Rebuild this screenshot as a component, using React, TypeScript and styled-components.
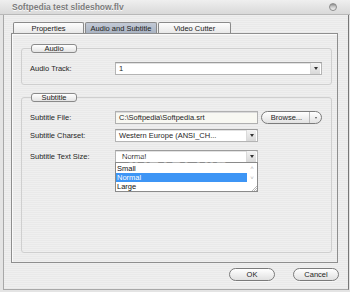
import React from 'react';
import styled, { createGlobalStyle } from 'styled-components';

const Global = createGlobalStyle`
  html, body { margin: 0; padding: 0; width: 350px; height: 292px; overflow: hidden; background: #dcdcdc; }
  * { box-sizing: border-box; }
`;

const stripes = `repeating-linear-gradient(to bottom, #efefef 0px, #efefef 1px, #e9e9e9 1px, #e9e9e9 2px)`;

const Window = styled.div`
  width: 350px;
  height: 292px;
  display: flex;
  flex-direction: column;
  font-family: "Liberation Sans", Arial, sans-serif;
  font-size: 7.5px;
  color: #262626;
  background: #e4e4e4;
`;

const TitleBar = styled.div`
  height: 15px;
  flex: none;
  display: flex;
  align-items: center;
  justify-content: space-between;
  padding: 0 12px 0 12px;
  background: linear-gradient(#efefef, #d9d9d9);
  border-bottom: 1px solid #b8b8b8;
`;

const Title = styled.span`
  font-size: 8.5px;
  font-weight: bold;
  color: #7c7c7c;
  text-shadow: 0 1px 0 #fafafa;
`;

const CloseDot = styled.span`
  width: 8px;
  height: 8px;
  border-radius: 50%;
  border: 1px solid #8c8c8c;
  background: linear-gradient(#8c8c8c 0, #c8c8c8 45%, #f4f4f4 100%);
  margin-right: 1px;
`;

const Frame = styled.div`
  flex: 1;
  margin-left: 3px;
  margin-right: 1px;
  margin-bottom: 2px;
  border-left: 1px solid #a8a8a8;
  border-right: 1px solid #777;
  border-bottom: 1px solid #a8a8a8;
  background: ${stripes};
  display: flex;
  flex-direction: column;
  padding: 7px 10px 0 7px;
`;

const TabRow = styled.div`
  display: flex;
  margin-left: 2px;
  height: 11px;
`;

const Tab = styled.div<{ $active?: boolean; $w: number }>`
  width: ${p => p.$w}px;
  height: 11px;
  display: flex;
  align-items: center;
  justify-content: center;
  border: 1px solid #8a8a8a;
  border-bottom: none;
  margin-right: 1px;
  border-radius: 2px 2px 0 0;
  background: ${p => (p.$active ? 'linear-gradient(#c3cad6, #a9b3c2)' : 'linear-gradient(#fdfdfd, #e8e8e8)')};
  color: #222;
`;

const Panel = styled.div`
  height: 230px;
  border: 1px solid #8e8e8e;
  box-shadow: inset 1px 1px 0 #fafafa;
  padding: 10px 5px 0 9px;
  display: flex;
  flex-direction: column;
  gap: 8px;
  position: relative;
`;

const Group = styled.fieldset<{ $h?: number }>`
  margin: 0;
  padding: 9px 9px 9px 8px;
  border: 1px solid #cfcfcf;
  border-radius: 3px;
  min-width: 0;
  ${p => (p.$h ? `height: ${p.$h}px;` : '')}
  position: relative;
`;

const Legend = styled.legend`
  width: 46px;
  height: 9px;
  padding: 0;
  margin-left: 1px;
  border: 1px solid #8a8a8a;
  border-radius: 3px;
  background: linear-gradient(#ffffff, #e4e4e4);
  display: flex;
  align-items: center;
  justify-content: center;
  color: #222;
  line-height: 1;
`;

const Rows = styled.div`
  display: flex;
  flex-direction: column;
  gap: 5px;
`;

const Row = styled.div<{ $mt?: number }>`
  display: flex;
  align-items: center;
  height: 13px;
  ${p => (p.$mt ? `margin-top: ${p.$mt}px;` : '')}
  position: relative;
`;

const Label = styled.span`
  width: 85px;
  flex: none;
  color: #262626;
`;

const Select = styled.div<{ $w: number }>`
  width: ${p => p.$w}px;
  height: 13px;
  display: flex;
  align-items: center;
  background: #fff;
  border: 1px solid #b4b4b4;
  border-top-color: #9c9c9c;
  box-shadow: inset 0 1px 0 #e2e2e2;
`;

const SelectText = styled.span<{ $pl?: number }>`
  flex: 1;
  padding-left: ${p => p.$pl ?? 3}px;
  white-space: nowrap;
  overflow: hidden;
`;

const Arrow = styled.span`
  width: 10px;
  height: 11px;
  margin-right: 1px;
  display: flex;
  align-items: center;
  justify-content: center;
  background: linear-gradient(#f4f4f4, #d8d8d8);
  border-left: 1px solid #dadada;
  &::after {
    content: '';
    border-left: 2px solid transparent;
    border-right: 2px solid transparent;
    border-top: 3px solid #333;
  }
`;

const TextInput = styled.div`
  width: 143px;
  height: 13px;
  display: flex;
  align-items: center;
  padding-left: 3px;
  background: #f8f8f2;
  border: 1px solid #b0b0b0;
  box-shadow: inset 0 1px 0 #dadada;
`;

const BrowseButton = styled.div`
  width: 61px;
  height: 13px;
  margin-left: 3px;
  display: flex;
  align-items: center;
  border: 1px solid #7c7c7c;
  border-radius: 7px;
  background: linear-gradient(#ffffff, #e2e2e2);
`;

const BrowseText = styled.span`
  flex: 1;
  text-align: center;
  padding-left: 2px;
`;

const BrowseMenu = styled.span`
  width: 12px;
  height: 100%;
  border-left: 1px solid #b8b8b8;
  display: flex;
  align-items: center;
  justify-content: center;
  &::after {
    content: '';
    border-left: 1.5px solid transparent;
    border-right: 1.5px solid transparent;
    border-top: 2px solid #555;
  }
`;

const Popup = styled.div`
  position: absolute;
  left: 85px;
  top: 12px;
  width: 143px;
  height: 30px;
  background: #fff;
  border: 1px solid #8a8a8a;
  display: flex;
  z-index: 2;
`;

const PopupList = styled.div`
  flex: 1;
  display: flex;
  flex-direction: column;
  padding-top: 1px;
`;

const PopupItem = styled.div<{ $sel?: boolean }>`
  height: 9px;
  line-height: 9px;
  padding-left: 1px;
  background: ${p => (p.$sel ? '#3d95f5' : 'transparent')};
  color: ${p => (p.$sel ? '#fff' : '#111')};
`;

const Scroll = styled.div`
  width: 10px;
  display: flex;
  flex-direction: column;
  align-items: center;
  justify-content: space-between;
  color: #b0b0b0;
  font-size: 6px;
  line-height: 6px;
  padding: 2px 0 0;
`;

const Grip = styled.svg`
  width: 6px;
  height: 6px;
  align-self: flex-end;
`;

const Footer = styled.div`
  display: flex;
  justify-content: flex-end;
  gap: 18px;
  padding: 5px 0 0 0;
  margin-right: -1px;
`;

const PillButton = styled.div`
  width: 46px;
  height: 13px;
  display: flex;
  align-items: center;
  justify-content: center;
  border: 1px solid #7a7a7a;
  border-radius: 7px;
  background: linear-gradient(#ffffff, #e0e0e0);
  box-shadow: 0 1px 0 #f8f8f8;
  color: #222;
`;

const Watermark = styled.div`
  position: absolute;
  left: 110px;
  top: 118px;
  font-size: 17px;
  font-weight: bold;
  letter-spacing: 1px;
  color: rgba(255, 255, 255, 0.4);
  pointer-events: none;
  z-index: 3;
`;

export default function App() {
  return (
    <>
      <Global />
      <Window>
        <TitleBar>
          <Title>Softpedia test slideshow.flv</Title>
          <CloseDot />
        </TitleBar>
        <Frame>
          <TabRow>
            <Tab $w={71}>Properties</Tab>
            <Tab $w={72} $active>Audio and Subtitle</Tab>
            <Tab $w={73}>Video Cutter</Tab>
          </TabRow>
          <Panel>
            <Group>
              <Legend>Audio</Legend>
              <Row>
                <Label>Audio Track:</Label>
                <Select $w={208}>
                  <SelectText>1</SelectText>
                  <Arrow />
                </Select>
              </Row>
            </Group>
            <Group $h={160}>
              <Legend>Subtitle</Legend>
              <Rows>
                <Row>
                  <Label>Subtitle File:</Label>
                  <TextInput>C:\Softpedia\Softpedia.srt</TextInput>
                  <BrowseButton>
                    <BrowseText>Browse...</BrowseText>
                    <BrowseMenu />
                  </BrowseButton>
                </Row>
                <Row>
                  <Label>Subtitle Charset:</Label>
                  <Select $w={143}>
                    <SelectText>Western Europe (ANSI_CH...</SelectText>
                    <Arrow />
                  </Select>
                </Row>
                <Row $mt={3}>
                  <Label>Subtitle Text Size:</Label>
                  <Select $w={143}>
                    <SelectText $pl={6}>Normal</SelectText>
                    <Arrow />
                  </Select>
                  <Popup>
                    <PopupList>
                      <PopupItem>Small</PopupItem>
                      <PopupItem $sel>Normal</PopupItem>
                      <PopupItem>Large</PopupItem>
                    </PopupList>
                    <Scroll>
                      <span>˄</span>
                      <span>˅</span>
                      <Grip viewBox="0 0 6 6">
                        <path d="M1 6 L6 1 M3 6 L6 3 M5 6 L6 5" stroke="#999" strokeWidth="0.7" />
                      </Grip>
                    </Scroll>
                  </Popup>
                </Row>
              </Rows>
            </Group>
            <Watermark>SOFTPEDIA</Watermark>
          </Panel>
          <Footer>
            <PillButton>OK</PillButton>
            <PillButton>Cancel</PillButton>
          </Footer>
        </Frame>
      </Window>
    </>
  );
}
